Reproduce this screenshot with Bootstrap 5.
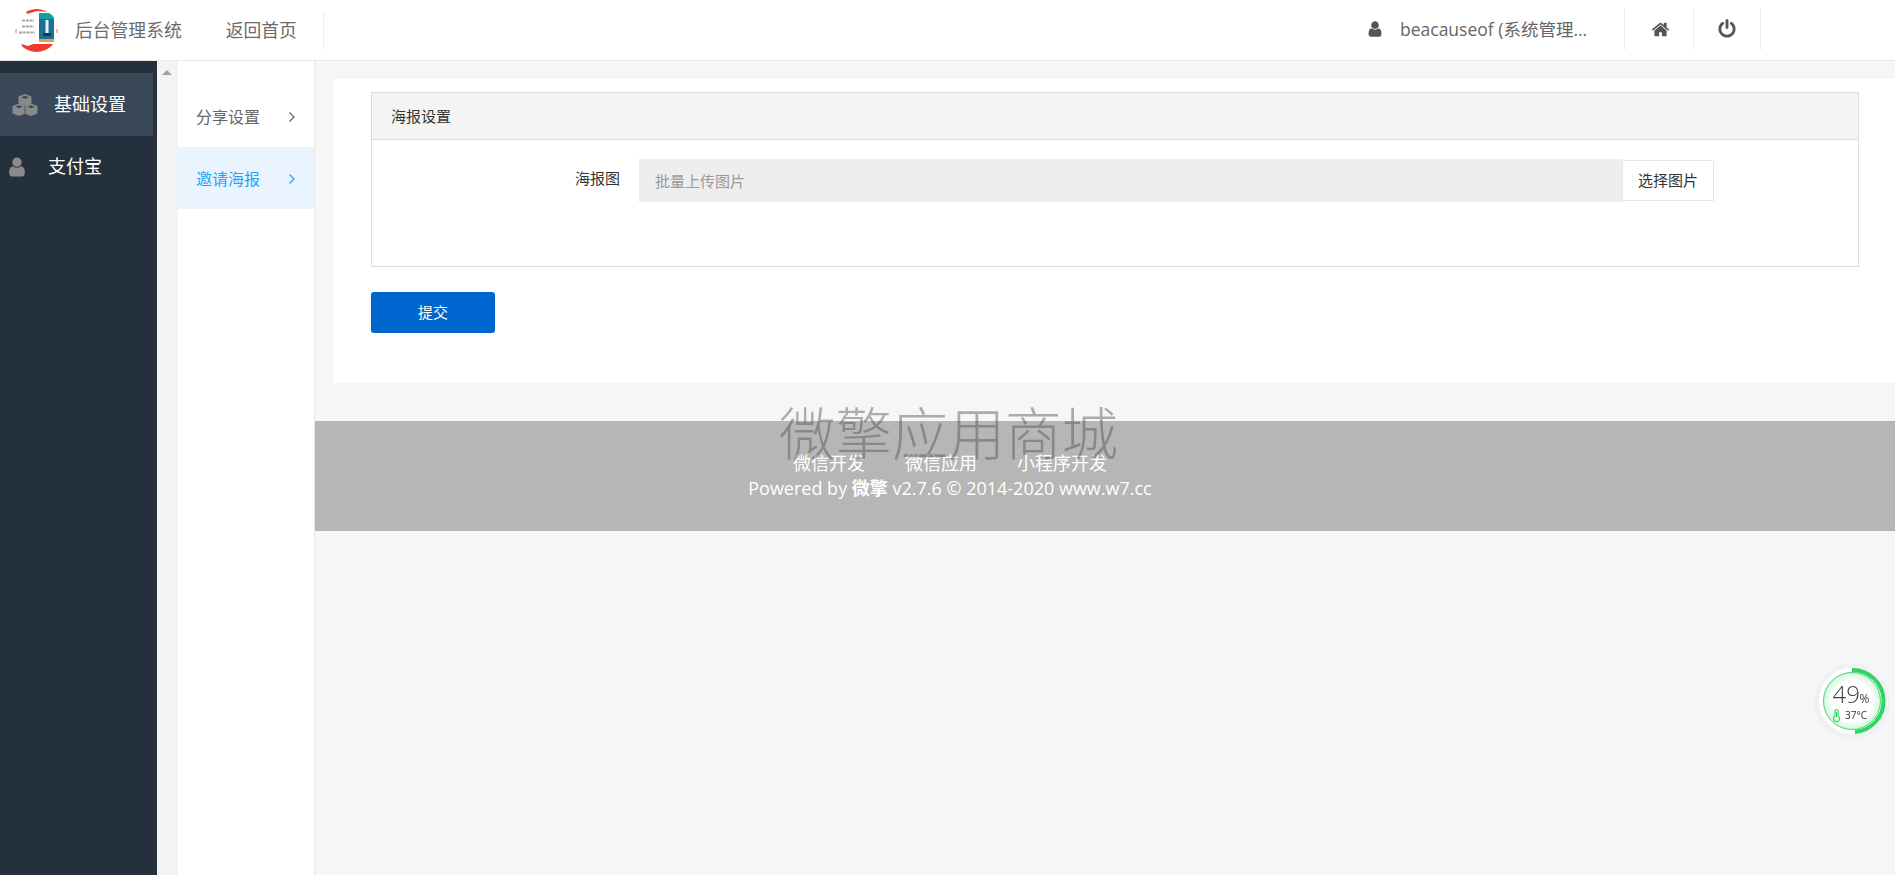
<!DOCTYPE html>
<html lang="zh-CN">
<head>
    <meta charset="UTF-8">
    <meta name="viewport" content="width=device-width, initial-scale=1.0">
    <link href="https://cdn.jsdelivr.net/npm/bootstrap@5.3.0/dist/css/bootstrap.min.css" rel="stylesheet">
    <script defer src="https://cdn.jsdelivr.net/npm/bootstrap@5.3.0/dist/js/bootstrap.bundle.min.js"></script>
    <title>后台管理系统</title>
    <style>
        html, body { height: 100%; }
        body {
            font-family: "Open Sans", "Noto Sans CJK SC", sans-serif;
            background: #f5f6f8;
            overflow: hidden;
            color: #333;
        }
        .top-bar { height: 61px; background: #fff; border-bottom: 1px solid #e9e9e9; }
        .brand-logo { margin-left: 15px; width: 43px; height: 43px; }
        .brand-name { margin-left: 17px; font-size: 17.800px; color: #6b6b6b; }
        .back-link { margin-left: 44px; padding-right: 26px; font-size: 17.800px; color: #6b6b6b; height: 37px; line-height: 37px; border-right: 1px solid #eee; text-decoration: none; }
        .user-icon { width: 18px; height: 18px; margin-top: -2px; }
        .user-name { font-size: 17.500px; color: #666; margin: 0 34px 2px 16px; width: 190px; }
        .top-icon { height: 42px; width: 69px; border-left: 1px solid #eee; margin-top: -2px; }
        .top-icon.end-cell { width: 68px; border-right: 1px solid #eee; margin-right: 134px; }
        .home-icon { width: 19px; height: 19px; margin-left: 3px; }
        .power-icon { width: 20px; height: 20px; }
        .page-body { height: 814px; }
        .side-main { width: 157px; background: #25303d; padding-top: 12px; }
        .side-item { height: 63px; width: 153px; color: #fff; font-size: 18px; text-decoration: none; }
        .side-item.on { background: #394759; }
        .side-item.short-row { height: 61px; }
        .cubes-icon { margin-left: 12px; margin-right: 16px; width: 26px; height: 22px; }
        .person-icon { margin-left: 6px; margin-right: 20px; width: 22px; height: 22px; }
        .side-strip { width: 21px; background: #f3f3f3; padding: 9px 0 0 5px; }
        .strip-arrow { width: 0; height: 0; border-left: 5px solid transparent; border-right: 5px solid transparent; border-bottom: 5px solid #a3a3a3; }
        .side-sub { width: 137px; background: #fff; border-right: 1px solid #e9e9e9; padding-top: 24px; }
        .sub-item { height: 62px; padding: 2px 18px 0; font-size: 16px; color: #666; text-decoration: none; }
        .sub-item.on { background: #eaf4fe; color: #1fa5f7; }
        .main-area { min-width: 0; }
        .white-panel { margin: 18px 0 0 19px; height: 304px; background: #fff; padding: 13px 36px 0 37px; }
        .set-box { height: 175px; border: 1px solid #ddd; border-radius: 0; }
        .set-box .card-header { height: 47px; padding: 0 19px; line-height: 46px; font-size: 15px; background: #f4f4f4; border-bottom: 1px solid #ddd; border-radius: 0; color: #333; }
        .set-box .card-body { padding: 19px 0 0 0; }
        .field-name { width: 248px; text-align: right; font-size: 15px; line-height: 38px; color: #333; }
        .field-wrap { width: 1075px; margin-left: 19px; }
        .pic-input { height: 43px; width: 983px; flex: none; background: #eee; border: 0; border-radius: 0; padding: 0 16px; font-size: 15px; color: #999; }
        .pic-input::placeholder { color: #999; }
        .pic-btn { width: 92px; height: 41px; margin-top: 1px; background: #fff; border: 1px solid #e7e7e7; border-radius: 0; font-size: 15px; color: #333; padding: 0; }
        .save-btn { width: 124px; height: 41px; margin-top: 25px; background: #0066cf; border: 0; border-radius: 3px; color: #fff; font-size: 15px; padding: 0; }
        .foot-bar { position: relative; height: 110px; margin-top: 38px; background: #b5b6b5; padding-right: 310px; color: #fff; text-align: center; padding-top: 31px; }
        .foot-links { font-size: 18px; line-height: 23px; }
        .foot-links span { margin: 0 20px; }
        .foot-copy { font-size: 18px; line-height: 26px; }
        .water-text { position: absolute; left: 464px; top: -19px; font-size: 56.500px; line-height: 64px; color: rgba(80,80,80,.45); white-space: nowrap; font-weight: 300; }
        .temp-ball { position: fixed; left: 1812px; top: 661px; width: 80px; height: 80px; font-family: "Open Sans", sans-serif; }
    </style>
</head>
<body>
    <!-- top bar -->
    <header class="top-bar d-flex align-items-center">
        <svg class="brand-logo" viewBox="0 0 43 43">
            <defs><clipPath id="logoClip"><circle cx="21.500" cy="21.500" r="21.500"/></clipPath></defs>
            <g clip-path="url(#logoClip)">
                <rect width="43" height="43" fill="#fff"/>
                <path d="M10 0H32V3L22 2 12 5Z" fill="#ee3b2e"/>
                <path d="M33 0L43 6V13L40 5Z" fill="#f5a9a2"/>
                <path d="M6 35L13 37 18 35 38 35 34 43H10Z" fill="#ee3b2e"/>
                <path d="M0 20h2v4H0zM41 20h2v4h-2z" fill="#f3b4ae"/>
                <rect x="24" y="4" width="15" height="26" fill="#1b6f9c"/>
                <rect x="24" y="4" width="15" height="6" fill="#10a39a"/>
                <rect x="24" y="30" width="15" height="3" fill="#f0a030"/>
                <rect x="30.500" y="11" width="3" height="13" fill="#eef1f4"/>
                <rect x="28" y="24" width="8" height="3" fill="#0e3a5c"/>
                <path d="M7 11.500h12M7 17.500h12M4 23.500h16" stroke="#a5a5a5" stroke-width="2" stroke-dasharray="3 .8"/>
            </g>
        </svg>
        <span class="brand-name">后台管理系统</span>
        <a class="back-link" href="#">返回首页</a>
        <div class="ms-auto d-flex align-items-center">
            <svg class="user-icon" viewBox="0 0 1792 1792" fill="#555"><path d="M1536 1399q0 109-62.500 187t-150.500 78h-854q-88 0-150.500-78t-62.500-187q0-85 8.500-160.500t31.500-152 58.500-131 94-89 134.500-34.500q131 128 313 128t313-128q76 0 134.500 34.500t94 89 58.500 131 31.500 152 8.500 160.500zm-256-887q0 159-112.500 271.500t-271.500 112.500-271.500-112.500-112.500-271.500 112.500-271.500 271.500-112.500 271.500 112.500 112.500 271.500z"/></svg>
            <span class="user-name text-truncate">beacauseof (系统管理员)</span>
            <div class="top-icon d-flex align-items-center justify-content-center">
                <svg class="home-icon" viewBox="0 0 1792 1792" fill="#555"><path d="M1472 992v480q0 26-19 45t-45 19h-384v-384h-256v384h-384q-26 0-45-19t-19-45v-480q0-1 .5-3t.5-3l575-474 575 474q1 2 1 6zm223-69l-62 74q-8 9-21 11h-3q-13 0-21-7l-692-577-692 577q-12 8-24 7-13-2-21-11l-62-74q-8-10-7-23.500t11-21.500l719-599q32-26 76-26t76 26l244 204v-195q0-14 9-23t23-9h192q14 0 23 9t9 23v408l219 182q10 8 11 21.500t-7 23.500z"/></svg>
            </div>
            <div class="top-icon end-cell d-flex align-items-center justify-content-center">
                <svg class="power-icon" viewBox="0 0 1792 1792" fill="#555"><path d="M1664 896q0 156-61 298t-164 245-245 164-298 61-298-61-245-164-164-245-61-298q0-182 80.500-343t226.500-270q43-32 95.500-25t83.500 50q32 42 24.500 94.500t-49.500 84.500q-98 74-151.500 181t-53.500 228q0 104 40.500 198.500t109.500 163.500 163.500 109.500 198.500 40.500 198.500-40.500 163.500-109.500 109.500-163.500 40.500-198.500q0-121-53.500-228t-151.500-181q-42-32-49.500-84.500t24.500-94.500q31-43 84-50t95 25q146 109 226.500 270t80.500 343zm-640-768v640q0 52-38 90t-90 38-90-38-38-90v-640q0-52 38-90t90-38 90 38 38 90z"/></svg>
            </div>
        </div>
    </header>

    <div class="page-body d-flex">
        <!-- left menu -->
        <nav class="side-main flex-shrink-0">
            <a class="side-item on d-flex align-items-center" href="#">
                <svg class="cubes-icon" viewBox="0 0 26 22" fill="#8a8a8a">
                    <path d="M13 0l6.500 2.500v7L13 12 6.500 9.500v-7z"/>
                    <path d="M7 9.500l6.500 2.500v7.500L7 22 .5 19.500V12z"/>
                    <path d="M19 9.500l6.500 2.500v7.500L19 22l-6.500-2.500V12z"/>
                    <path d="M13 1.800l3.800 1.500L13 4.800 9.200 3.300zM7 11.300l3.800 1.500L7 14.300 3.200 12.800zM19 11.300l3.800 1.500L19 14.300l-3.800-1.500z" fill="#394759"/>
                    <path d="M13 12v7.500" stroke="#394759" stroke-width=".8"/>
                </svg>
                <span>基础设置</span>
            </a>
            <a class="side-item short-row d-flex align-items-center" href="#">
                <svg class="person-icon" viewBox="0 0 1792 1792" fill="#8a8a8a"><path d="M1536 1399q0 109-62.500 187t-150.500 78h-854q-88 0-150.500-78t-62.500-187q0-85 8.500-160.500t31.500-152 58.500-131 94-89 134.500-34.500q131 128 313 128t313-128q76 0 134.500 34.500t94 89 58.500 131 31.500 152 8.500 160.500zm-256-887q0 159-112.500 271.500t-271.500 112.500-271.500-112.500-112.500-271.500 112.500-271.500 271.500-112.500 271.500 112.500 112.500 271.500z"/></svg>
                <span>支付宝</span>
            </a>
        </nav>
        <div class="side-strip flex-shrink-0"><div class="strip-arrow"></div></div>
        <nav class="side-sub flex-shrink-0">
            <a class="sub-item d-flex align-items-center justify-content-between" href="#">分享设置
                <svg width="8" height="12" viewBox="0 0 8 12" fill="none" stroke="currentColor" stroke-width="1.300"><path d="M1.500 1.500L6 6l-4.500 4.500"/></svg>
            </a>
            <a class="sub-item on d-flex align-items-center justify-content-between" href="#">邀请海报
                <svg width="8" height="12" viewBox="0 0 8 12" fill="none" stroke="currentColor" stroke-width="1.300"><path d="M1.500 1.500L6 6l-4.500 4.500"/></svg>
            </a>
        </nav>

        <main class="main-area flex-grow-1">
            <div class="white-panel">
                <div class="card set-box">
                    <div class="card-header">海报设置</div>
                    <div class="card-body d-flex">
                        <div class="field-name">海报图</div>
                        <div class="field-wrap input-group flex-nowrap align-items-start">
                            <input class="form-control pic-input" type="text" placeholder="批量上传图片" readonly>
                            <button class="btn pic-btn" type="button">选择图片</button>
                        </div>
                    </div>
                </div>
                <button class="btn save-btn" type="button">提交</button>
            </div>
            <footer class="foot-bar">
                <div class="water-text">微擎应用商城</div>
                <div class="foot-links"><span>微信开发</span><span>微信应用</span><span>小程序开发</span></div>
                <div class="foot-copy">Powered by <b>微擎</b> v2.7.6 © 2014-2020 www.w7.cc</div>
            </footer>
        </main>
    </div>

    <!-- floating temperature ball -->
    <svg class="temp-ball" viewBox="0 0 80 80">
        <defs>
            <radialGradient id="ballFill"><stop offset="70%" stop-color="#fff"/><stop offset="100%" stop-color="#d3f5dc"/></radialGradient>
        </defs>
        <circle cx="40" cy="40" r="38" fill="#eff1f3"/>
        <circle cx="40" cy="40" r="31" fill="none" stroke="#fff" stroke-width="4"/>
        <circle cx="40" cy="40" r="28.500" fill="url(#ballFill)" stroke="#4fd873" stroke-width="1"/>
        <path d="M40 9A31 31 0 0 1 43 70.900" fill="none" stroke="#2fd564" stroke-width="4"/>
        <text x="20.500" y="42" font-size="24" fill="#444" font-weight="300">49</text>
        <text x="47.500" y="42" font-size="12" fill="#444">%</text>
        <text x="33" y="58" font-size="10" fill="#333">37°C</text>
        <path d="M23 50a1.500 1.500 0 0 1 3 0v5a3 3 0 1 1-3 0z" fill="none" stroke="#2fd564" stroke-width="1.200"/>
        <path d="M24.500 51v5" stroke="#2fd564" stroke-width="1"/>
    </svg>
</body>
</html>
